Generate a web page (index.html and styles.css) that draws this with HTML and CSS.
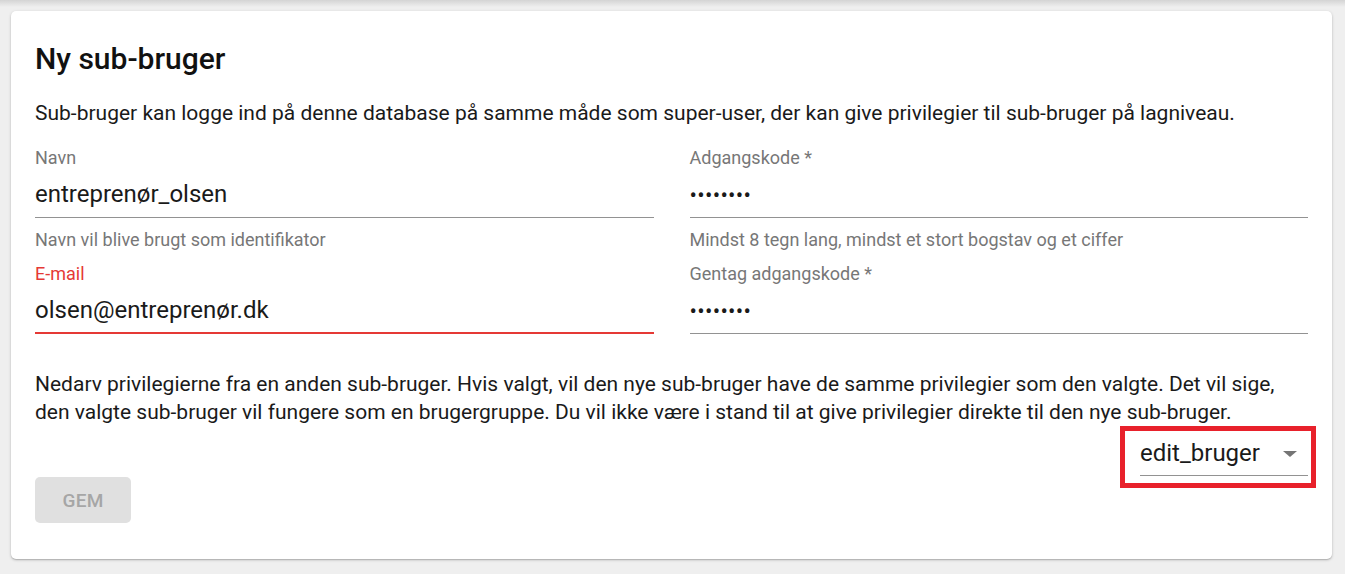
FILE: index.html
```html
<!DOCTYPE html>
<html lang="da">
<head>
<meta charset="utf-8">
<title>Ny sub-bruger</title>
<link rel="stylesheet" href="styles.css">
</head>
<body>
<div class="topshade"></div>
<main class="card">
  <h2 class="title">Ny sub-bruger</h2>
  <p class="intro">Sub-bruger kan logge ind på denne database på samme måde som super-user, der kan give privilegier til sub-bruger på lagniveau.</p>
  <div class="fields">
    <div class="field">
      <label class="label">Navn</label>
      <div class="input">entreprenør_olsen</div>
      <div class="helper">Navn vil blive brugt som identifikator</div>
    </div>
    <div class="field">
      <label class="label">Adgangskode *</label>
      <div class="input dots">••••••••</div>
      <div class="helper">Mindst 8 tegn lang, mindst et stort bogstav og et ciffer</div>
    </div>
    <div class="field">
      <label class="label error">E-mail</label>
      <div class="input input-error">olsen@entreprenør.dk</div>
    </div>
    <div class="field">
      <label class="label">Gentag adgangskode *</label>
      <div class="input dots">••••••••</div>
    </div>
  </div>
  <p class="inherit">Nedarv privilegierne fra en anden sub-bruger. Hvis valgt, vil den nye sub-bruger have de samme privilegier som den valgte. Det vil sige, den valgte sub-bruger vil fungere som en brugergruppe. Du vil ikke være i stand til at give privilegier direkte til den nye sub-bruger.</p>
  <div class="select-row">
    <div class="select">
      <span class="select-value">edit_bruger</span>
      <span class="arrow"></span>
    </div>
  </div>
  <button class="btn" disabled>GEM</button>
</main>
</body>
</html>
```

FILE: styles.css
```css
html, body {
  margin: 0;
  padding: 0;
}
body {
  background: #efefef;
  font-family: Roboto, "Liberation Sans", Arial, sans-serif;
  color: rgba(0,0,0,0.87);
  padding: 11px 13px 15px 11px;
  min-height: 574px;
  box-sizing: border-box;
  position: relative;
}
.topshade {
  position: absolute;
  left: 0;
  right: 0;
  top: 0;
  height: 7px;
  background: linear-gradient(#d4d4d4, rgba(239,239,239,0));
}
.card {
  background: #fff;
  border-radius: 5px;
  box-shadow: 0 1px 3px rgba(0,0,0,0.22), 0 1px 1px rgba(0,0,0,0.12);
  padding: 30px 24px 36px 24px;
  position: relative;
}
.title {
  margin: 0;
  font-size: 30px;
  font-weight: 500;
  line-height: 36px;
  color: #111;
}
.intro {
  margin: 22px 0 0 0;
  font-size: 21px;
  line-height: 28px;
  color: #1a1a1a;
}
.fields {
  display: grid;
  grid-template-columns: 1fr 1fr;
  column-gap: 36px;
  row-gap: 14px;
  margin-top: 21px;
}
.field {
  display: flex;
  flex-direction: column;
}
.label {
  font-size: 18px;
  line-height: 20px;
  color: #777;
}
.label.error {
  color: #e53935;
}
.input {
  font-size: 24px;
  line-height: 24px;
  height: 24px;
  padding: 14px 0 11px 0;
  border-bottom: 1px solid #929292;
  color: #1a1a1a;
  white-space: nowrap;
}
.input.dots {
  font-size: 22px;
  letter-spacing: 0.3px;
  padding-top: 16px;
  padding-bottom: 9px;
}
.input-error {
  padding-bottom: 10px;
  border-bottom: 2px solid #e53935;
}
.helper {
  font-size: 18px;
  line-height: 20px;
  color: #777;
  margin-top: 12px;
}
.inherit {
  margin: 36px 0 0 0;
  font-size: 21px;
  line-height: 28px;
  color: #1a1a1a;
}
.select-row {
  display: flex;
  justify-content: flex-end;
}
.select {
  position: relative;
  width: 168px;
  display: flex;
  align-items: center;
  padding: 15px 0 10px 0;
  border-bottom: 1px solid #929292;
}
.select::after {
  content: "";
  position: absolute;
  left: -20px;
  right: -8px;
  top: 0;
  bottom: -13px;
  border: 5px solid #e8212b;
  pointer-events: none;
}
.select-value {
  flex: 1;
  font-size: 24px;
  line-height: 24px;
  color: #1a1a1a;
}
.arrow {
  width: 0;
  height: 0;
  border-left: 7px solid transparent;
  border-right: 7px solid transparent;
  border-top: 6px solid #757575;
  margin-right: 11px;
  margin-top: 1px;
}
.btn {
  display: block;
  margin-top: 1px;
  width: 96px;
  height: 46px;
  border: none;
  border-radius: 5px;
  background: #e0e0e0;
  color: #a6a6a6;
  font-family: Roboto, "Liberation Sans", Arial, sans-serif;
  font-size: 19px;
  font-weight: 500;
  letter-spacing: 0.3px;
}
```
